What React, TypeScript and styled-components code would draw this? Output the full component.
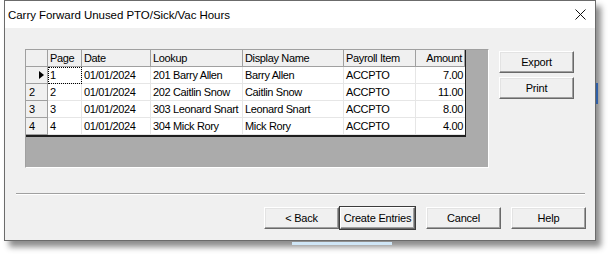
import React from "react";
import styled, { createGlobalStyle } from "styled-components";

const Global = createGlobalStyle`
  html, body { margin: 0; padding: 0; background: #ffffff; }
  body { width: 611px; height: 257px; overflow: hidden; font-family: "Liberation Sans", Arial, sans-serif; }
  * { box-sizing: border-box; }
`;

const Page = styled.div`
  position: relative;
  width: 611px;
  height: 257px;
  padding-left: 4px;
  background: #ffffff;
`;

const BehindEdge = styled.div<{ $color: string }>`
  position: absolute;
  background: ${(p) => p.$color};
`;

const Window = styled.div`
  position: relative;
  width: 592px;
  height: 241px;
  border: 1px solid #6b6b6b;
  background: #f0f0f0;
  box-shadow: 5px 6px 6px rgba(0, 0, 0, 0.45);
  display: flex;
  flex-direction: column;
`;

const TitleBar = styled.div`
  height: 27px;
  background: #ffffff;
  display: flex;
  align-items: center;
  justify-content: space-between;
  padding: 0 9px 0 3px;
`;

const Title = styled.span`
  font-family: "Liberation Sans", Arial, sans-serif;
  font-size: 11.5px;
  color: #000;
  letter-spacing: -0.05px;
`;

const Content = styled.div`
  flex: 1;
  display: flex;
  flex-direction: column;
  padding: 21px 9px 0 20px;
`;

const TopRow = styled.div`
  display: flex;
  align-items: flex-start;
`;

const GridPanel = styled.div`
  width: 464px;
  height: 119px;
  background: #ababab;
  border-top: 1px solid #a0a0a0;
  border-left: 1px solid #a0a0a0;
  border-right: 1px solid #ffffff;
  border-bottom: 1px solid #ffffff;
`;

const Table = styled.div`
  display: grid;
  grid-template-columns: 22px 34px 69px 92px 101px 72px 49px;
  grid-template-rows: 17px repeat(4, 17px);
  width: 440px;
  border-right: 1px solid #1e1e1e;
  border-bottom: 2px solid #1e1e1e;
  font-family: "Liberation Sans", Arial, sans-serif;
  font-size: 11px;
  letter-spacing: -0.35px;
  color: #000;
`;

const HeadCell = styled.div<{ $right?: boolean }>`
  background: #f0f0f0;
  border-right: 1px solid #a0a0a0;
  border-bottom: 1px solid #a0a0a0;
  display: flex;
  align-items: center;
  justify-content: ${(p) => (p.$right ? "flex-end" : "flex-start")};
  padding: 0 2px;
  white-space: nowrap;
  overflow: hidden;
`;

const RowHead = styled.div`
  background: #f0f0f0;
  border-right: 1px solid #a0a0a0;
  border-bottom: 1px solid #a0a0a0;
  display: flex;
  align-items: center;
  padding: 0 3px 0 3px;
  white-space: nowrap;
`;

const Indicator = styled.span`
  margin-left: auto;
  width: 0;
  height: 0;
  border-top: 4px solid transparent;
  border-bottom: 4px solid transparent;
  border-left: 5px solid #000;
`;

const Cell = styled.div<{ $right?: boolean; $focus?: boolean; $last?: boolean }>`
  background: #ffffff;
  border-right: ${(p) => (p.$last ? "none" : "1px solid #e6e6e6")};
  border-bottom: 1px solid #e6e6e6;
  display: flex;
  align-items: center;
  justify-content: ${(p) => (p.$right ? "flex-end" : "flex-start")};
  padding: 0 2px;
  white-space: nowrap;
  overflow: hidden;
  outline: ${(p) => (p.$focus ? "1px dotted #000" : "none")};
  outline-offset: -1px;
`;

const SideButtons = styled.div`
  display: flex;
  flex-direction: column;
  gap: 4px;
  margin: 2px 0 0 10px;
`;

const Button = styled.button<{ $default?: boolean; $w?: number }>`
  width: ${(p) => p.$w ?? 75}px;
  height: 22px;
  margin: 0;
  padding: 0;
  background: #f0f0f0;
  font-family: "Liberation Sans", Arial, sans-serif;
  font-size: 11px;
  letter-spacing: -0.2px;
  white-space: nowrap;
  color: #000;
  border-style: solid;
  border-width: 1px;
  border-color: #ffffff #696969 #696969 #ffffff;
  box-shadow: ${(p) =>
    p.$default
      ? "0 0 0 1px #3c3c3c, inset -1px -1px 0 #a0a0a0"
      : "inset -1px -1px 0 #a0a0a0, inset 1px 1px 0 #e3e3e3"};
  cursor: default;
`;

const Separator = styled.div`
  margin: 25px 0 0 -9px;
  width: 569px;
  border-top: 1px solid #a0a0a0;
  border-bottom: 1px solid #ffffff;
`;

const BottomRow = styled.div`
  display: flex;
  justify-content: flex-end;
  margin-top: 12px;
`;

const Spacer = styled.span<{ $w: number }>`
  display: inline-block;
  width: ${(p) => p.$w}px;
`;

const CloseIcon = () => (
  <svg width="11" height="11" viewBox="0 0 11 11">
    <path d="M0.5 0.5 L10.5 10.5 M10.5 0.5 L0.5 10.5" stroke="#111" strokeWidth="1" fill="none" />
  </svg>
);

const rows = [
  { page: "1", date: "01/01/2024", lookup: "201 Barry Allen", name: "Barry Allen", item: "ACCPTO", amount: "7.00" },
  { page: "2", date: "01/01/2024", lookup: "202 Caitlin Snow", name: "Caitlin Snow", item: "ACCPTO", amount: "11.00" },
  { page: "3", date: "01/01/2024", lookup: "303 Leonard Snart", name: "Leonard Snart", item: "ACCPTO", amount: "8.00" },
  { page: "4", date: "01/01/2024", lookup: "304 Mick Rory", name: "Mick Rory", item: "ACCPTO", amount: "4.00" },
];

export default function App() {
  return (
    <>
      <Global />
      <Page>
        <Window>
          <TitleBar>
            <Title>Carry Forward Unused PTO/Sick/Vac Hours</Title>
            <CloseIcon />
          </TitleBar>
          <Content>
            <TopRow>
              <GridPanel>
                <Table>
                  <HeadCell />
                  <HeadCell>Page</HeadCell>
                  <HeadCell>Date</HeadCell>
                  <HeadCell>Lookup</HeadCell>
                  <HeadCell>Display Name</HeadCell>
                  <HeadCell>Payroll Item</HeadCell>
                  <HeadCell $right>Amount</HeadCell>
                  {rows.map((r, i) => (
                    <React.Fragment key={r.page}>
                      <RowHead>{i === 0 ? <Indicator /> : r.page}</RowHead>
                      <Cell $focus={i === 0}>{r.page}</Cell>
                      <Cell>{r.date}</Cell>
                      <Cell>{r.lookup}</Cell>
                      <Cell>{r.name}</Cell>
                      <Cell>{r.item}</Cell>
                      <Cell $right $last>{r.amount}</Cell>
                    </React.Fragment>
                  ))}
                </Table>
              </GridPanel>
              <SideButtons>
                <Button>Export</Button>
                <Button>Print</Button>
              </SideButtons>
            </TopRow>
            <Separator />
            <BottomRow>
              <Button>&lt; Back</Button>
              <Spacer $w={1} />
              <Button $default>Create Entries</Button>
              <Spacer $w={11} />
              <Button>Cancel</Button>
              <Spacer $w={10} />
              <Button>Help</Button>
            </BottomRow>
          </Content>
        </Window>
        <BehindEdge $color="#2f5fa6" style={{ left: 596, top: 83, width: 2, height: 21 }} />
        <BehindEdge $color="#cfe6f6" style={{ left: 292, top: 242, width: 100, height: 3 }} />
      </Page>
    </>
  );
}
